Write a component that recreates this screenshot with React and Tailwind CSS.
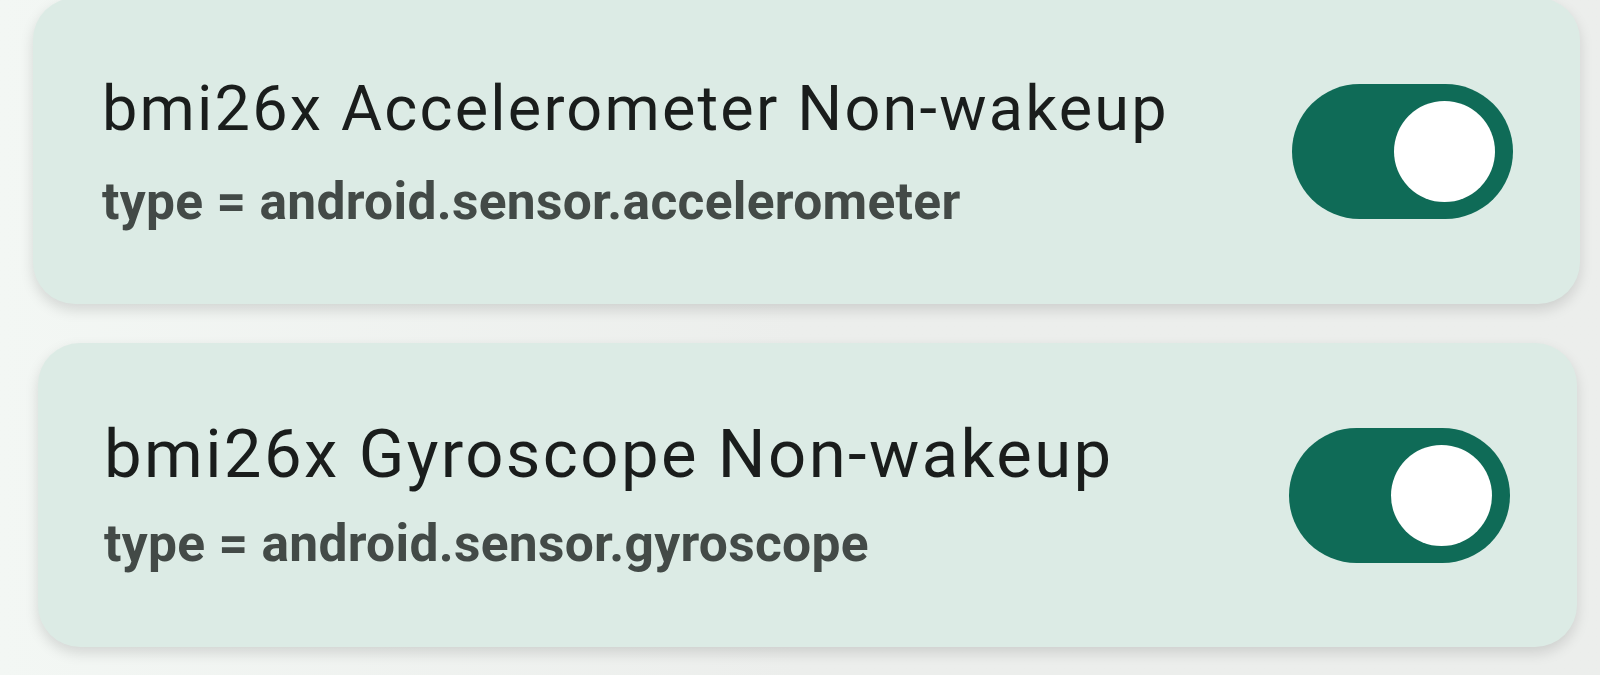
import React from 'react'

const SENSORS = [
  {
    name: 'bmi26x Accelerometer Non-wakeup',
    type: 'android.sensor.accelerometer',
    card: 'mt-[-2px] ml-[33px] mr-[20px] h-[306px] pl-[69px] pr-[67px]',
    title: 'text-[63px] tracking-[2.2px]',
    sub: 'mt-[25px] text-[51.5px]',
  },
  {
    name: 'bmi26x Gyroscope Non-wakeup',
    type: 'android.sensor.gyroscope',
    card: 'mt-[39px] ml-[38px] mr-[23px] h-[304px] pl-[66px] pr-[67px]',
    title: 'text-[67px] tracking-[2.4px]',
    sub: 'mt-[22px] text-[51.5px]',
  },
]

function Toggle({ on }) {
  return (
    <div
      className={`flex h-[135px] w-[221px] shrink-0 items-center rounded-full px-[18px] ${on ? 'justify-end bg-[#0f6b57]' : 'justify-start bg-[#70797a]'}`}
    >
      <div className="h-[101px] w-[101px] rounded-full bg-white" />
    </div>
  )
}

function SensorCard({ sensor }) {
  return (
    <div
      className={`flex items-center justify-between rounded-[42px] bg-[#dcebe5] shadow-[0_6px_14px_rgba(0,0,0,0.13)] ${sensor.card}`}
    >
      <div className="flex flex-col">
        <p className={`leading-[76px] text-[#1a1d1c] ${sensor.title}`}>{sensor.name}</p>
        <p className={`font-bold leading-[60px] tracking-[0.3px] text-[#434a47] ${sensor.sub}`}>
          type = {sensor.type}
        </p>
      </div>
      <Toggle on />
    </div>
  )
}

export default function App() {
  return (
    <div className="h-[675px] w-[1600px] overflow-hidden bg-gradient-to-r from-[#f3f7f4] via-[#eceeec] to-[#eceeec] font-['Roboto',sans-serif]">
      {SENSORS.map((sensor) => (
        <SensorCard key={sensor.name} sensor={sensor} />
      ))}
    </div>
  )
}
